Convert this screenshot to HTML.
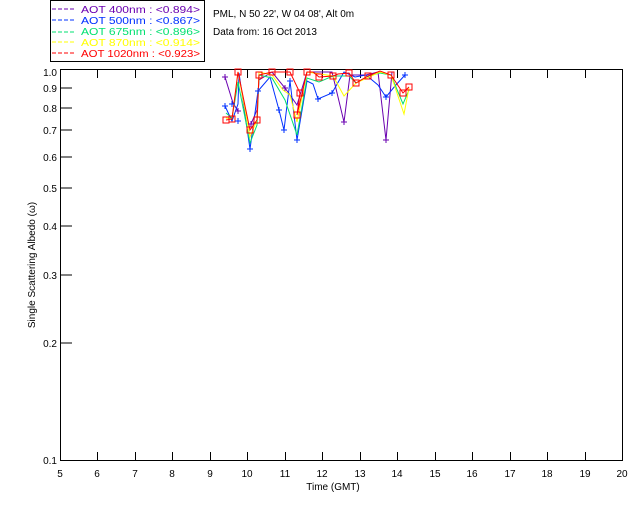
<!DOCTYPE html>
<html><head><style>
body{margin:0;background:#fff;width:640px;height:512px;overflow:hidden}
svg text{font-family:"Liberation Sans",sans-serif;font-size:10px}
</style></head><body>
<svg width="640" height="512" xmlns="http://www.w3.org/2000/svg">
<rect x="50.5" y="0.5" width="154" height="61" fill="#fff" stroke="#000"/>
<g stroke-width="1" stroke-dasharray="4,2">
<line x1="52" y1="9" x2="74" y2="9" stroke="#6a00b0"/>
<line x1="52" y1="20" x2="74" y2="20" stroke="#0030ff"/>
<line x1="52" y1="32" x2="74" y2="32" stroke="#00e070"/>
<line x1="52" y1="42" x2="74" y2="42" stroke="#ffff00"/>
<line x1="52" y1="53" x2="74" y2="53" stroke="#ff0000"/>
</g>
<g font-size="11">
<text x="81" y="13" fill="#6a00b0" textLength="119" lengthAdjust="spacingAndGlyphs">AOT  400nm : &lt;0.894&gt;</text>
<text x="81" y="24" fill="#0030ff" textLength="119" lengthAdjust="spacingAndGlyphs">AOT  500nm : &lt;0.867&gt;</text>
<text x="81" y="35" fill="#00e070" textLength="119" lengthAdjust="spacingAndGlyphs">AOT  675nm : &lt;0.896&gt;</text>
<text x="81" y="46" fill="#ffff00" textLength="119" lengthAdjust="spacingAndGlyphs">AOT  870nm : &lt;0.914&gt;</text>
<text x="81" y="57" fill="#ff0000" textLength="119" lengthAdjust="spacingAndGlyphs">AOT 1020nm : &lt;0.923&gt;</text>
</g>
<text x="213" y="17" fill="#000">PML, N 50 22', W 04 08', Alt 0m</text>
<text x="213" y="35" fill="#000">Data from: 16 Oct 2013</text>
<g stroke="#000" fill="none">
<rect x="60.5" y="69.5" width="562" height="391"/>
<path d="M60 88h12M60 108h12M60 130h12M60 157h12M60 188h12M60 226h12M60 275h12M60 343h12"/>
<path d="M97.5 460v-8M135.5 460v-8M172.5 460v-8M210.5 460v-8M247.5 460v-8M285.5 460v-8M322.5 460v-8M360.5 460v-8M397.5 460v-8M435.5 460v-8M472.5 460v-8M510.5 460v-8M547.5 460v-8M585.5 460v-8"/>
<path d="M97.5 70v8M135.5 70v8M172.5 70v8M210.5 70v8M247.5 70v8M285.5 70v8M322.5 70v8M360.5 70v8M397.5 70v8M435.5 70v8M472.5 70v8M510.5 70v8M547.5 70v8M585.5 70v8"/>
</g>
<g fill="#000" text-anchor="end">
<text x="57" y="76">1.0</text><text x="57" y="92">0.9</text><text x="57" y="112">0.8</text><text x="57" y="134">0.7</text><text x="57" y="161">0.6</text><text x="57" y="192">0.5</text><text x="57" y="230">0.4</text><text x="57" y="279">0.3</text><text x="57" y="347">0.2</text><text x="57" y="464">0.1</text>
</g>
<g fill="#000" text-anchor="middle">
<text x="60" y="477">5</text><text x="97" y="477">6</text><text x="135" y="477">7</text><text x="172" y="477">8</text><text x="210" y="477">9</text><text x="247" y="477">10</text><text x="285" y="477">11</text><text x="322" y="477">12</text><text x="360" y="477">13</text><text x="397" y="477">14</text><text x="435" y="477">15</text><text x="472" y="477">16</text><text x="510" y="477">17</text><text x="547" y="477">18</text><text x="585" y="477">19</text><text x="622" y="477">20</text>
<text x="333" y="490">Time (GMT)</text>
<text transform="translate(35,265) rotate(-90)">Single Scattering Albedo (ω)</text>
</g>
<g fill="none">
<polyline stroke="#6a00b0" points="225,77 233,103 238,111"/>
<polyline stroke="#6a00b0" points="251,124 257,110 259,80 272,72 285,88 290,95 297,105 307,72 332,72 344,122 350,75 366,75 378,72 386,140 392,72"/>
<polyline stroke="#0030ff" points="225,106 232,121 238,104 239,73 250,149 258,91 270,77 279,110 284,130 290,81 297,140 307,81 313,84 318,99 332,93 344,72 355,77 366,75 378,85 386,97 395,86 405,75"/>
<polyline stroke="#00e070" points="226,113 232,118 238,82 250,143 257,125 259,75 272,78 285,100 297,135 307,78 319,82 333,76 349,76 356,83 368,76 380,73 391,75 403,104 409,90"/>
<polyline stroke="#ffff00" points="226,118 232,119 238,72 250,137 257,120 259,72 272,75 283,90 290,95 297,122 307,72 333,76 344,96 356,83 380,72 391,75 404,114 409,88"/>
<polyline stroke="#ff0000" points="226,120 232,119 238,72 250,130 257,120 259,75 272,72 279,72 290,72 300,93 297,115 307,72 313,72 319,77 333,76 338,74 349,73 356,83 368,76 380,71 391,75 403,93 409,87"/>
</g>
<g fill="none" stroke="#ff0000">
<path d="M223 117h6v6h-6zM229 116h6v6h-6zM235 69h6v6h-6zM247 127h6v6h-6zM254 117h6v6h-6zM256 72h6v6h-6zM269 69h6v6h-6zM287 69h6v6h-6zM297 90h6v6h-6zM294 112h6v6h-6zM304 69h6v6h-6zM316 74h6v6h-6zM330 73h6v6h-6zM346 70h6v6h-6zM353 80h6v6h-6zM365 73h6v6h-6zM388 72h6v6h-6zM400 90h6v6h-6zM406 84h6v6h-6z"/>
</g>
<g stroke="#0030ff">
<path d="M222 106h6M225 103v6M229 104h6M232 101v6M235 121h6M238 118v6M247 149h6M250 146v6M255 91h6M258 88v6M276 110h6M279 107v6M281 130h6M284 127v6M294 140h6M297 137v6M287 81h6M290 78v6M315 99h6M318 96v6M329 93h6M332 90v6M383 97h6M386 94v6M402 75h6M405 72v6"/>
</g>
<g stroke="#6a00b0">
<path d="M222 77h6M225 74v6M235 111h6M238 108v6M248 124h6M251 121v6M341 122h6M344 119v6M383 140h6M386 137v6M282 88h6M285 85v6"/>
</g>
</svg>
</body></html>
